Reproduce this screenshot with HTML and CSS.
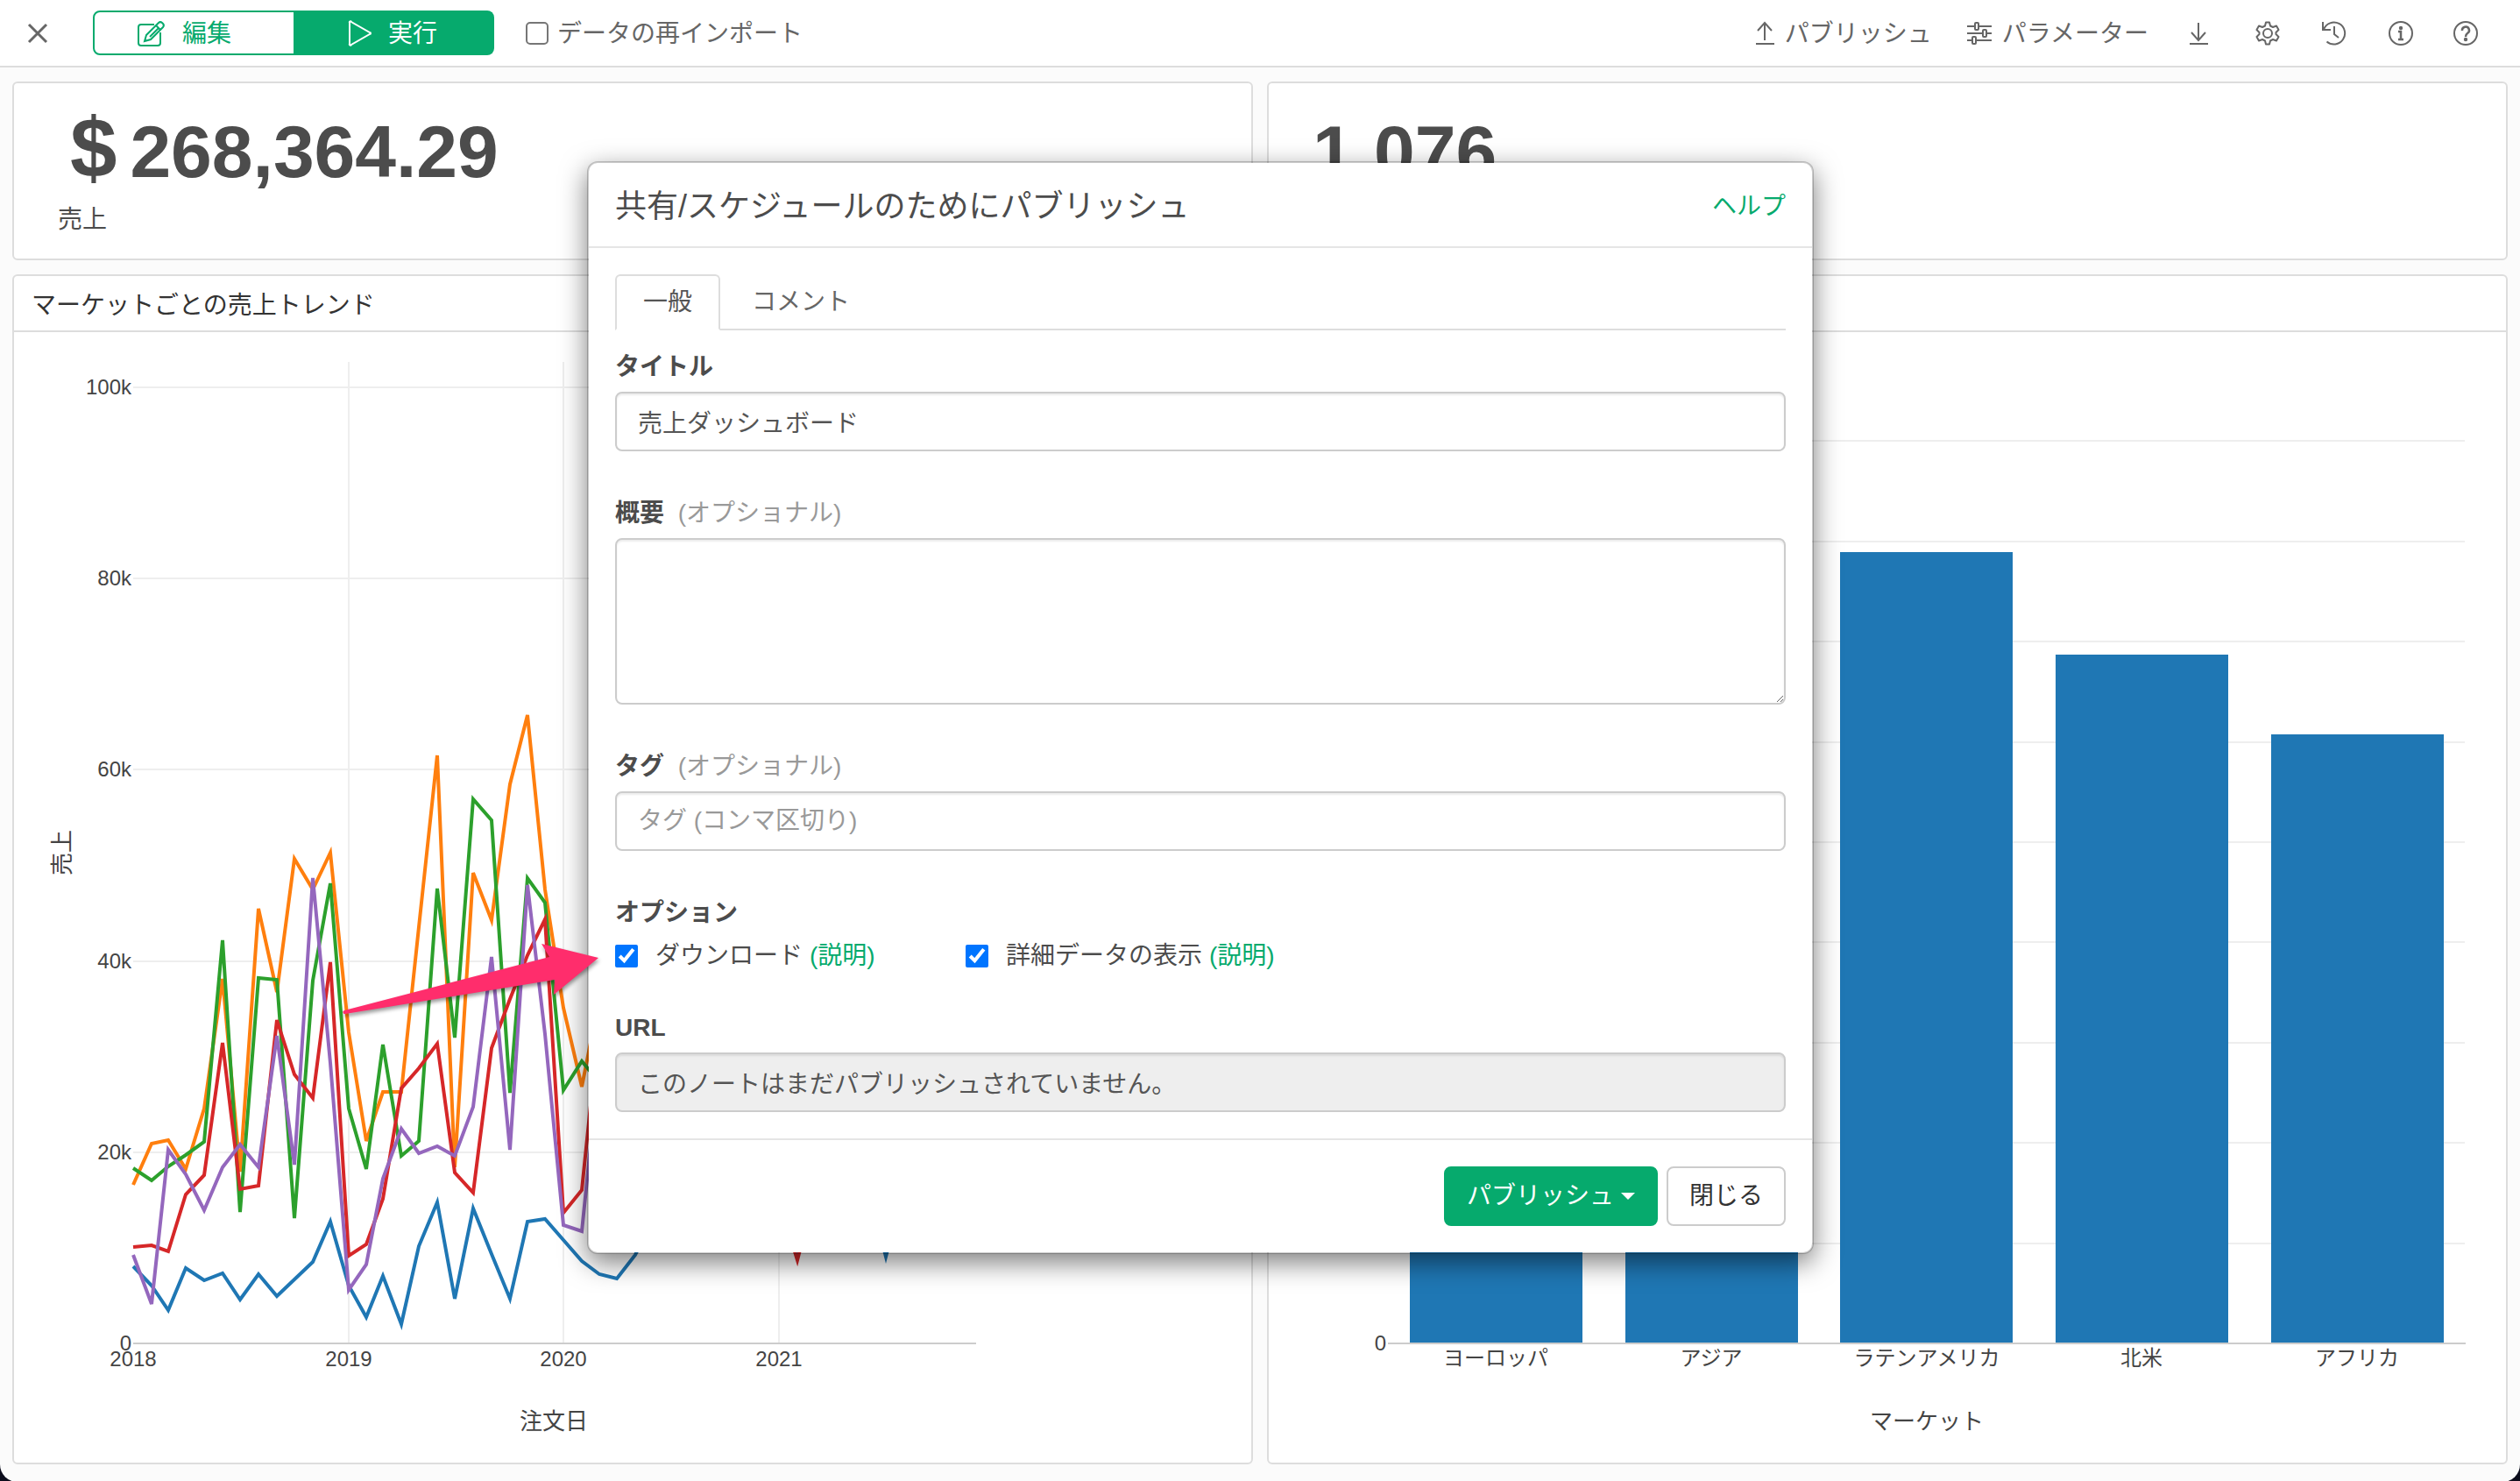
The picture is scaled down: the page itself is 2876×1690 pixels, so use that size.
FILE: index.html
```html
<!DOCTYPE html>
<html lang="ja">
<head>
<meta charset="utf-8">
<title>売上ダッシュボード</title>
<link rel="stylesheet" href="styles.css">
</head>
<body>
<div class="app">
  <header class="topbar">
    <button class="icon-btn close-btn" type="button" aria-label="閉じる">
      <svg width="26" height="26" viewBox="0 0 26 26"><path d="M3 3 23 23M23 3 3 23" stroke-width="3"/></svg>
    </button>
    <div class="mode-switch">
      <button class="mode mode-edit" type="button">
        <svg width="34" height="32" viewBox="0 0 34 32"><path d="M20 6H5a3 3 0 0 0-3 3v18a3 3 0 0 0 3 3h19a3 3 0 0 0 3-3V15M11 18 25 4a3 3 0 0 1 4 0l1 1a3 3 0 0 1 0 4L16 23l-7 2zM22 7l5 5M15 20 25 10"/></svg>
        <span>編集</span>
      </button>
      <button class="mode mode-run" type="button">
        <svg width="28" height="30" viewBox="0 0 28 30"><path d="M2 3v24a1 1 0 0 0 2 1L25 16a1 1 0 0 0 0-2L4 2a1 1 0 0 0-2 1z"/></svg>
        <span>実行</span>
      </button>
    </div>
    <label class="reimport"><input class="check check-empty" type="checkbox"><span>データの再インポート</span></label>
    <nav class="tools">
      <button class="icon-btn text-btn" type="button">
        <svg width="22" height="28" viewBox="0 0 22 28"><path d="M11 22V2M3 11l8-9 8 9M1 26h21"/></svg>
        <span>パブリッシュ</span>
      </button>
      <button class="icon-btn text-btn" type="button">
        <svg width="28" height="28" viewBox="0 0 28 28"><path d="M0 6h9m5 0h14M0 14h18m5 0h5M0 22h6m4 0h18"/><rect x="9" y="2" width="4" height="8" rx="1"/><rect x="18" y="10" width="4" height="8" rx="1"/><rect x="6" y="18" width="4" height="8" rx="1"/></svg>
        <span>パラメーター</span>
      </button>
      <div class="tool-icons">
        <button class="icon-btn" type="button" aria-label="ダウンロード">
          <svg width="32" height="28" viewBox="0 0 32 28"><path d="M13 2v20M5 13l8 9 8-9M3 26h21"/></svg>
        </button>
        <button class="icon-btn" type="button" aria-label="設定">
          <svg width="30" height="28" viewBox="0 0 30 28"><path d="M12 1.500h4l1 4 3 1.500 4-1.500 2.500 4.500-3 3v2l3 3-2.500 4.500-4-1.500-3 1.500-1 4h-4l-1-4-3-1.500-4 1.500-2.500-4.500 3-3v-2l-3-3L4 5.500 8 7l3-1.500z" stroke-linejoin="round"/><circle cx="14" cy="14" r="5"/></svg>
        </button>
        <button class="icon-btn" type="button" aria-label="履歴">
          <svg width="30" height="28" viewBox="0 0 30 28"><path d="M1 1v9h9M2 9.500A12.500 12.500 0 1 1 5.500 23.500M14 6v9l5 4"/></svg>
        </button>
        <button class="icon-btn" type="button" aria-label="情報">
          <svg width="28" height="28" viewBox="0 0 28 28"><circle cx="14" cy="14" r="13"/><path d="M11 12h3v9M11 21h6" stroke-width="2.500"/><circle cx="14" cy="8" r="1.200" class="dot"/></svg>
        </button>
        <button class="icon-btn" type="button" aria-label="ヘルプ">
          <svg width="28" height="28" viewBox="0 0 28 28"><circle cx="14" cy="14" r="13"/><path d="M10 11a4 4 0 1 1 6 3c-1.500 1-2 1.500-2 4" stroke-width="2.500"/><circle cx="14" cy="21" r="1.200" class="dot"/></svg>
        </button>
      </div>
    </nav>
  </header>

  <main class="board">
    <section class="card kpi">
      <p class="kpi-value"><span class="kpi-unit">$</span><span>268,364.29</span></p>
      <p class="kpi-label">売上</p>
    </section>
    <section class="card kpi">
      <p class="kpi-value">1,076</p>
      <p class="kpi-label">顧客数</p>
    </section>

    <section class="card chart-card">
      <h2 class="card-title">マーケットごとの売上トレンド</h2>
      <svg class="chart" viewBox="16 379 1412 1290" role="img" aria-label="マーケットごとの売上トレンド">
        <path class="grid" d="M152 442H1113M152 660H1113M152 878H1113M152 1097H1113M152 1315H1113M398 413V1533M643 413V1533M889 413V1533"/>
        <path class="axis" d="M152 1533H1114"/>
        <g class="tick end">
          <text x="150" y="450">100k</text><text x="150" y="668">80k</text><text x="150" y="886">60k</text><text x="150" y="1105">40k</text><text x="150" y="1323">20k</text><text x="150" y="1541">0</text>
        </g>
        <g class="tick mid">
          <text x="152" y="1559">2018</text><text x="398" y="1559">2019</text><text x="643" y="1559">2020</text><text x="889" y="1559">2021</text>
        </g>
        <text class="axis-title" x="632" y="1631">注文日</text>
        <text class="axis-title" transform="translate(80 973) rotate(-90)">売上</text>
        <g class="lines">
          <path stroke="#1f77b4" d="M152 1445 173 1467 192 1495 212 1447 233 1461 254 1453 274 1483 295 1454 316 1479 336 1460 357 1440 377 1394 398 1467 418 1503 437 1456 458 1511 478 1422 499 1372 519 1482 540 1379 561 1431 582 1482 602 1394 622 1391 643 1415 664 1439 684 1454 704 1459 725 1432 745 1392M889 1370 910 1434 925 1390M997 1380 1011 1434 1025 1380"/>
          <path stroke="#ff7f0e" d="M152 1352 173 1305 192 1301 212 1334 233 1265 254 1117 274 1337 295 1037 316 1132 336 980 357 1015 377 973 398 1178 418 1302 437 1246 458 1246 478 1058 499 862 519 1332 540 996 561 1050 582 895 602 816 622 1015 643 1150 664 1240 684 1140"/>
          <path stroke="#2ca02c" d="M152 1333 173 1347 192 1331 212 1318 233 1303 254 1073 274 1383 295 1116 316 1118 336 1390 357 1119 377 1008 398 1265 418 1334 437 1192 458 1319 478 1302 499 1014 519 1184 540 912 561 936 582 1247 602 1002 622 1030 643 1244 664 1211 684 1235"/>
          <path stroke="#d62728" d="M152 1423 173 1421 192 1428 212 1363 233 1341 254 1190 274 1357 295 1353 316 1164 336 1226 357 1253 377 1098 398 1433 418 1420 437 1368 458 1242 478 1219 499 1191 519 1338 540 1361 561 1196 582 1140 602 1090 622 1049 643 1384 664 1358 684 1165M889 1370 910 1438 925 1380"/>
          <path stroke="#9467bd" d="M152 1432 173 1488 192 1312 212 1340 233 1381 254 1332 274 1306 295 1332 316 1182 336 1329 357 1002 377 1213 398 1472 418 1443 437 1345 458 1288 478 1316 499 1308 519 1319 540 1263 561 1092 582 1312 602 1010 622 1180 643 1398 664 1405 684 1210"/>
        </g>
      </svg>
    </section>

    <section class="card chart-card">
      <h2 class="card-title">マーケットごとの売上</h2>
      <svg class="chart" viewBox="1448 379 1412 1290" role="img" aria-label="マーケットごとの売上">
        <path class="grid" d="M1584 503H2813M1584 618H2813M1584 732H2813M1584 847H2813M1584 961H2813M1584 1075H2813M1584 1190H2813M1584 1304H2813M1584 1419H2813"/>
        <path class="axis" d="M1584 1533H2814"/>
        <g class="bars">
          <rect x="1609" y="560" width="197" height="972"/>
          <rect x="1855" y="600" width="197" height="932"/>
          <rect x="2100" y="630" width="197" height="902"/>
          <rect x="2346" y="747" width="197" height="785"/>
          <rect x="2592" y="838" width="197" height="694"/>
        </g>
        <text class="tick end" x="1582" y="1541">0</text>
        <g class="tick mid">
          <text x="1707" y="1558">ヨーロッパ</text><text x="1953" y="1558">アジア</text><text x="2199" y="1558">ラテンアメリカ</text><text x="2444" y="1558">北米</text><text x="2690" y="1558">アフリカ</text>
        </g>
        <text class="axis-title" x="2199" y="1631">マーケット</text>
      </svg>
    </section>
  </main>
</div>

<div class="overlay">
  <form class="modal" role="dialog" aria-labelledby="dialog-title">
    <header class="modal-head">
      <h1 id="dialog-title">共有/スケジュールのためにパブリッシュ</h1>
      <a class="link" href="#help">ヘルプ</a>
    </header>
    <div class="modal-body">
      <div class="tabs" role="tablist">
        <button class="tab is-active" type="button" role="tab" aria-selected="true">一般</button>
        <button class="tab" type="button" role="tab" aria-selected="false">コメント</button>
      </div>
      <div class="field">
        <label class="field-label" for="f-title">タイトル</label>
        <input class="control" id="f-title" type="text" value="売上ダッシュボード">
      </div>
      <div class="field">
        <label class="field-label" for="f-desc">概要 <span class="optional">(オプショナル)</span></label>
        <textarea class="control area" id="f-desc"></textarea>
      </div>
      <div class="field">
        <label class="field-label" for="f-tags">タグ <span class="optional">(オプショナル)</span></label>
        <input class="control" id="f-tags" type="text" placeholder="タグ (コンマ区切り)">
      </div>
      <div class="field field-options">
        <span class="field-label">オプション</span>
        <div class="options">
          <div class="option"><input class="check" type="checkbox" id="o-dl" checked><label for="o-dl">ダウンロード</label> <a class="link" href="#download">(説明)</a></div>
          <div class="option"><input class="check" type="checkbox" id="o-detail" checked><label for="o-detail">詳細データの表示</label> <a class="link" href="#detail">(説明)</a></div>
        </div>
      </div>
      <div class="field">
        <label class="field-label" for="f-url">URL</label>
        <input class="control" id="f-url" type="text" value="このノートはまだパブリッシュされていません。" readonly>
      </div>
    </div>
    <footer class="modal-foot">
      <button class="btn btn-primary" type="button">パブリッシュ<span class="caret"></span></button>
      <button class="btn" type="button">閉じる</button>
    </footer>
  </form>
</div>

<svg class="pointer" width="300" height="90" viewBox="388 1070 300 90" aria-hidden="true">
  <path d="M393 1153 627 1092 618 1077 683 1093 632 1135 633 1118 394 1157a2 2 0 0 1-1-4z"/>
</svg>
</body>
</html>
```
FILE: styles.css
```css
* { box-sizing: border-box; }

body {
  margin: 0;
  background: #0c0d1c;
  color: #4c4c4c;
  font: 28px/40px "Liberation Sans", "Noto Sans CJK JP", sans-serif;
}

h1, h2, p { margin: 0; font-weight: 400; }

button, input, textarea { font: inherit; color: inherit; }
button { background: none; border: 0; padding: 0; cursor: pointer; }

.link { color: #06aa6d; text-decoration: none; }

.app {
  min-height: 100vh;
  display: flex;
  flex-direction: column;
  background: #fbfbfb;
  border-radius: 0 0 20px 20px;
}

/* Top bar */
.topbar {
  display: flex;
  align-items: center;
  height: 77px;
  padding: 0 48px 0 30px;
  background: #fff;
  border-bottom: 2px solid #ddd;
  color: #666;
}

.topbar svg { fill: none; stroke: currentColor; stroke-width: 2; flex: none; }
.topbar .dot { fill: currentColor; }
.topbar span { padding-top: 2px; }
.icon-btn { display: flex; align-items: center; }
.close-btn { margin-right: 50px; }

.mode-switch {
  display: grid;
  grid-template-columns: 1fr 1fr;
  width: 458px;
  height: 51px;
  margin-right: 36px;
  border: 2px solid #06aa6d;
  border-radius: 8px;
}

.mode { display: flex; align-items: center; gap: 18px; }
.mode-edit { padding-left: 48px; color: #06aa6d; }
.mode-run { padding-left: 62px; background: #06aa6d; color: #fff; }

.check { width: 26px; height: 26px; margin: 0; flex: none; }
.check-empty {
  appearance: none;
  background: #fff;
  border: 2px solid #767676;
  border-radius: 5px;
}
.check-empty:checked { background: #0075ff; border-color: #0075ff; }
.reimport { display: flex; align-items: center; gap: 10px; }

.tools { display: flex; align-items: center; gap: 40px; margin-left: auto; }
.text-btn { gap: 12px; }
.tool-icons { display: flex; gap: 46px; margin-left: 4px; }

/* Dashboard */
.board {
  flex: 1;
  display: grid;
  grid-template-columns: 1fr 1fr;
  grid-template-rows: 204px 1fr;
  gap: 16px;
  padding: 16px 14px 20px;
}

.card { background: #fff; border: 2px solid #ddd; border-radius: 6px; min-width: 0; }
.kpi { padding: 26px 50px; }
.kpi-value {
  display: flex;
  align-items: baseline;
  gap: 15px;
  height: 110px;
  padding-left: 14px;
  font-size: 84px;
  line-height: 104px;
  font-weight: 700;
}
.kpi:nth-child(2) .kpi-value { padding-left: 0; }
.kpi-unit { font-size: 96px; line-height: 84px; }

.chart-card { display: flex; flex-direction: column; }
.card-title {
  padding: 14px 20px 8px;
  border-bottom: 2px solid #ddd;
  font-size: 28px;
  color: #333;
}
.chart { flex: 1; width: 100%; min-height: 0; display: block; }
.grid { stroke: #eee; stroke-width: 2; fill: none; }
.axis { stroke: #ccc; stroke-width: 2; fill: none; }
.lines { fill: none; stroke-width: 4; }
.bars { fill: #1f77b4; }
.tick { font-size: 24px; fill: #444; }
.end { text-anchor: end; }
.mid { text-anchor: middle; }
.axis-title { font-size: 26px; fill: #444; text-anchor: middle; }

/* Dialog */
.overlay {
  position: absolute;
  inset: 0 136px 0 0;
  padding-top: 184px;
  display: flex;
  justify-content: center;
  align-items: flex-start;
}

.modal {
  width: 1400px;
  max-width: 100%;
  background: #fff;
  background-clip: padding-box;
  border: 2px solid rgba(0, 0, 0, .2);
  border-radius: 12px;
  box-shadow: 0 10px 30px rgba(0, 0, 0, .5);
}

.modal-head {
  display: flex;
  justify-content: space-between;
  align-items: center;
  padding: 24px 30px 20px;
  border-bottom: 2px solid #e5e5e5;
}
.modal-head h1 { font-size: 36px; line-height: 51px; }

.modal-body { padding: 30px; }

.tabs {
  display: flex;
  gap: 4px;
  margin-bottom: 20px;
  border-bottom: 2px solid #ddd;
}
.tab {
  margin-bottom: -2px;
  padding: 10px 30px;
  height: 64px;
  border: 2px solid transparent;
  color: #666;
}
.tab.is-active {
  background: #fff;
  border-color: #ddd #ddd #fff;
  border-radius: 6px 6px 0 0;
  color: #555;
}

.field { margin-bottom: 49px; }
.field:last-child { margin-bottom: 0; }
.field-options { margin-bottom: 39px; }
.field-label { display: block; padding-top: 2px; margin-bottom: 8px; font-weight: 700; }
.optional { margin-left: 8px; font-weight: 400; color: #999; }

.control {
  display: block;
  width: 100%;
  height: 68px;
  padding: 12px 24px;
  background: #fff;
  border: 2px solid #ccc;
  border-radius: 8px;
  box-shadow: inset 0 2px 2px rgba(0, 0, 0, .075);
  color: #555;
}
.control::placeholder { color: #999; opacity: 1; }
.control:read-only { background: #eee; }
.area { height: 190px; resize: vertical; }

.options { display: flex; }
.option { display: flex; align-items: center; width: 400px; height: 42px; }
.option label { margin: 0 8px 0 20px; }

.modal-foot {
  display: flex;
  justify-content: flex-end;
  gap: 10px;
  padding: 30px;
  border-top: 2px solid #e5e5e5;
}
.btn {
  display: flex;
  align-items: center;
  gap: 8px;
  height: 68px;
  padding: 0 24px;
  background: #fff;
  border: 2px solid #ccc;
  border-radius: 8px;
  color: #333;
}
.btn-primary { background: #06aa6d; border-color: #06aa6d; color: #fff; }
.caret { border: 8px solid transparent; border-top-color: currentColor; border-bottom: 0; }

/* Callout arrow lying over the dialog and the chart */
.pointer {
  position: absolute;
  left: 388px;
  top: 1070px;
  fill: #ff2d6c;
  filter: drop-shadow(1px 3px 2px rgba(0, 0, 0, .4));
}
```
